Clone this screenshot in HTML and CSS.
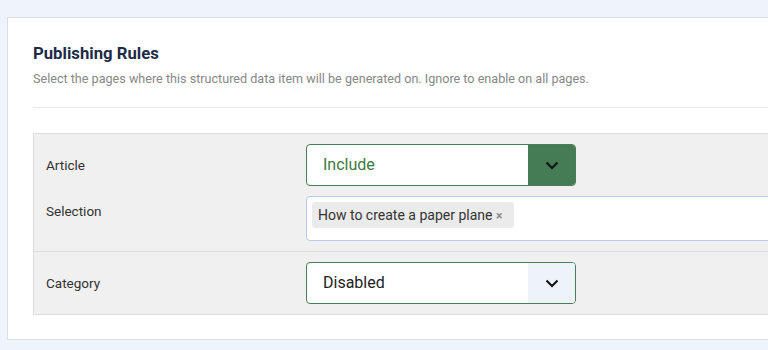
FILE: index.html
```html
<!DOCTYPE html>
<html lang="en">
<head>
    <meta charset="UTF-8">
    <meta name="viewport" content="width=device-width, initial-scale=1.0">
    <title>Publishing Rules</title>
    <link rel="stylesheet" href="styles.css">
</head>
<body>
    <div class="card">
        <h2 class="card-title">Publishing Rules</h2>
        <p class="card-desc">Select the pages where this structured data item will be generated on. Ignore to enable on all pages.</p>
        <hr class="divider">

        <div class="rules">
            <div class="rule">
                <div class="field field-center">
                    <label class="field-label">Article</label>
                    <div class="select select-active">
                        <span class="select-value">Include</span>
                        <span class="select-btn">
                            <svg width="14" height="9" viewBox="0 0 14 9"><path d="M1.5 1.5 L7 7 L12.5 1.5" fill="none" stroke="#111" stroke-width="2"/></svg>
                        </span>
                    </div>
                </div>
                <div class="field field-top">
                    <label class="field-label">Selection</label>
                    <div class="tags">
                        <span class="tag">How to create a paper plane <span class="tag-x">&times;</span></span>
                    </div>
                </div>
            </div>
            <div class="rule">
                <div class="field field-center">
                    <label class="field-label">Category</label>
                    <div class="select">
                        <span class="select-value">Disabled</span>
                        <span class="select-btn">
                            <svg width="14" height="9" viewBox="0 0 14 9"><path d="M1.5 1.5 L7 7 L12.5 1.5" fill="none" stroke="#111" stroke-width="2"/></svg>
                        </span>
                    </div>
                </div>
            </div>
        </div>
    </div>
</body>
</html>
```

FILE: styles.css
```css
html, body {
    overflow: hidden;
}
body {
    margin: 0;
    background-color: #eff4fb;
    font-family: Roboto, "Liberation Sans", sans-serif;
    color: #333;
}
.card {
    margin: 17px 0 0 7px;
    width: 820px;
    background: #fff;
    border: 1px solid #dadfe6;
    padding: 25px 25px 24px 25px;
}
.card-title {
    margin: 0;
    font-size: 16.7px;
    line-height: 21px;
    font-weight: 700;
    color: #1d2b49;
}
.card-desc {
    margin: 7px 0 0;
    font-size: 12.6px;
    line-height: 16px;
    color: #888;
}
.divider {
    margin: 20px 0 0;
    border: none;
    border-top: 1px solid #e8e8e8;
}
.rules {
    margin-top: 25px;
    background: #f0f0f0;
    border: 1px solid #dddddd;
}
.rule {
    padding: 10px 0 10px 12px;
    display: flex;
    flex-direction: column;
    gap: 10px;
}
.rule + .rule {
    border-top: 1px solid #dddddd;
}
.field {
    display: flex;
}
.field-center {
    align-items: center;
}
.field-top .field-label {
    padding-top: 7px;
}
.field-label {
    width: 260px;
    flex-shrink: 0;
    font-size: 13.5px;
    line-height: 16px;
    color: #333;
}
.select {
    width: 270px;
    height: 42px;
    box-sizing: border-box;
    border: 1px solid #4a7e57;
    border-radius: 4px;
    background: #fff;
    display: flex;
    overflow: hidden;
}
.select-value {
    flex: 1;
    padding-left: 16px;
    font-size: 16px;
    line-height: 40px;
    color: #222;
}
.select-active .select-value {
    color: #3b7b3e;
}
.select-btn {
    width: 47px;
    display: flex;
    align-items: center;
    justify-content: center;
    background: #eef3fb;
}
.select-active .select-btn {
    background: #467c55;
}
.tags {
    flex: 1;
    height: 45px;
    box-sizing: border-box;
    border: 1px solid #b8cae7;
    border-radius: 4px;
    background: #fff;
    padding: 5px;
}
.tag {
    display: inline-block;
    height: 26px;
    line-height: 26px;
    padding: 0 12px 0 6px;
    background: #ebebeb;
    border-radius: 3px;
    font-size: 14px;
    color: #333;
}
.tag-x {
    color: #888;
    font-weight: 700;
    font-size: 12px;
}
```
